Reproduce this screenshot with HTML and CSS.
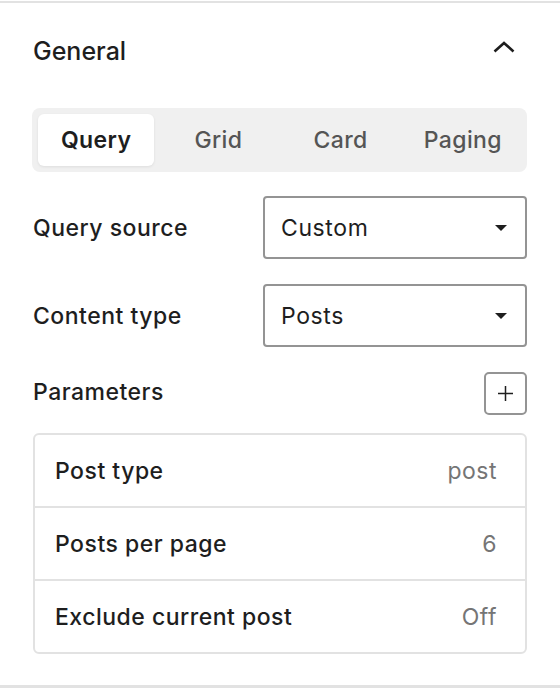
FILE: index.html
```html
<!DOCTYPE html>
<html lang="en">
<head>
    <meta charset="UTF-8">
    <meta name="viewport" content="width=device-width, initial-scale=1.0">
    <title>General - Query settings</title>
    <link rel="stylesheet" href="styles.css">
</head>
<body>
    <div class="panel">
        <div class="panel-header">
            <h2>General</h2>
            <svg class="chevron" width="22" height="12" viewBox="0 0 22 12">
                <path d="M1.5 10.5 L11 2 L20.5 10.5" fill="none" stroke="#1e1e1e" stroke-width="2.6"/>
            </svg>
        </div>

        <div class="tabs">
            <div class="tab active">Query</div>
            <div class="tab">Grid</div>
            <div class="tab">Card</div>
            <div class="tab">Paging</div>
        </div>

        <div class="field-row">
            <label>Query source</label>
            <div class="select-box">
                <span>Custom</span>
                <svg width="12" height="6" viewBox="0 0 12 6"><path d="M0 0 H12 L6 6 Z" fill="#1e1e1e"/></svg>
            </div>
        </div>

        <div class="field-row">
            <label>Content type</label>
            <div class="select-box">
                <span>Posts</span>
                <svg width="12" height="6" viewBox="0 0 12 6"><path d="M0 0 H12 L6 6 Z" fill="#1e1e1e"/></svg>
            </div>
        </div>

        <div class="field-row params-head">
            <label>Parameters</label>
            <button class="add-btn" type="button">
                <svg width="15" height="15" viewBox="0 0 15 15">
                    <path d="M7.5 0 V15 M0 7.5 H15" stroke="#1e1e1e" stroke-width="1.5"/>
                </svg>
            </button>
        </div>

        <div class="param-list">
            <div class="param-row"><span>Post type</span><span class="value">post</span></div>
            <div class="param-row"><span>Posts per page</span><span class="value">6</span></div>
            <div class="param-row"><span>Exclude current post</span><span class="value">Off</span></div>
        </div>
    </div>
</body>
</html>
```

FILE: styles.css
```css
/* Sidebar panel */
body { margin: 0; padding-top: 1px; background: #fff; font-family: Inter, "Noto Sans", sans-serif; color: #1e1e1e; }
.panel { border-top: 2px solid #e2e2e2; border-bottom: 3px solid #e2e2e2; padding: 0 33px 31px 32px; }
.panel-header { height: 96px; display: flex; align-items: center; justify-content: space-between; }
.panel-header h2 { margin: 0 0 0 1px; font-size: 25px; font-weight: 500; }
.chevron { margin-right: 12px; margin-top: -8px; }

.tabs { margin-top: 9px; height: 64px; box-sizing: border-box; padding: 6px; background: #f0f0f0; border-radius: 8px; display: grid; grid-template-columns: repeat(4, 1fr); gap: 6px; }
.tab { display: flex; align-items: center; justify-content: center; font-size: 23px; letter-spacing: 0.4px; font-weight: 500; color: #555; border-radius: 6px; }
.tab.active { background: #fff; color: #1e1e1e; font-weight: 600; box-shadow: 0 1px 3px rgba(0, 0, 0, 0.08); }

.field-row { display: flex; align-items: center; justify-content: space-between; margin-top: 24px; }
.field-row + .field-row { margin-top: 25px; }
.field-row label { font-size: 23px; letter-spacing: 0.5px; font-weight: 500; margin-left: 1px; }
.params-head label { margin-top: -3px; }
.select-box { width: 264px; height: 63px; box-sizing: border-box; border: 2px solid #949494; border-radius: 4px; padding: 0 18px 0 16px; display: flex; align-items: center; justify-content: space-between; font-size: 23px; letter-spacing: 0.6px; }

.add-btn { width: 43px; height: 43px; padding: 0; background: #fff; border: 2px solid #949494; border-radius: 5px; display: flex; align-items: center; justify-content: center; }

.param-list { margin-top: 18px; border: 2px solid #e2e2e2; border-radius: 6px; margin-left: 1px; }
.param-row { height: 71px; display: flex; align-items: center; justify-content: space-between; padding: 0 28px 0 20px; font-size: 23px; letter-spacing: 0.5px; font-weight: 500; }
.param-row + .param-row { border-top: 2px solid #e2e2e2; }
.param-row .value { color: #757575; font-weight: 400; }
```
